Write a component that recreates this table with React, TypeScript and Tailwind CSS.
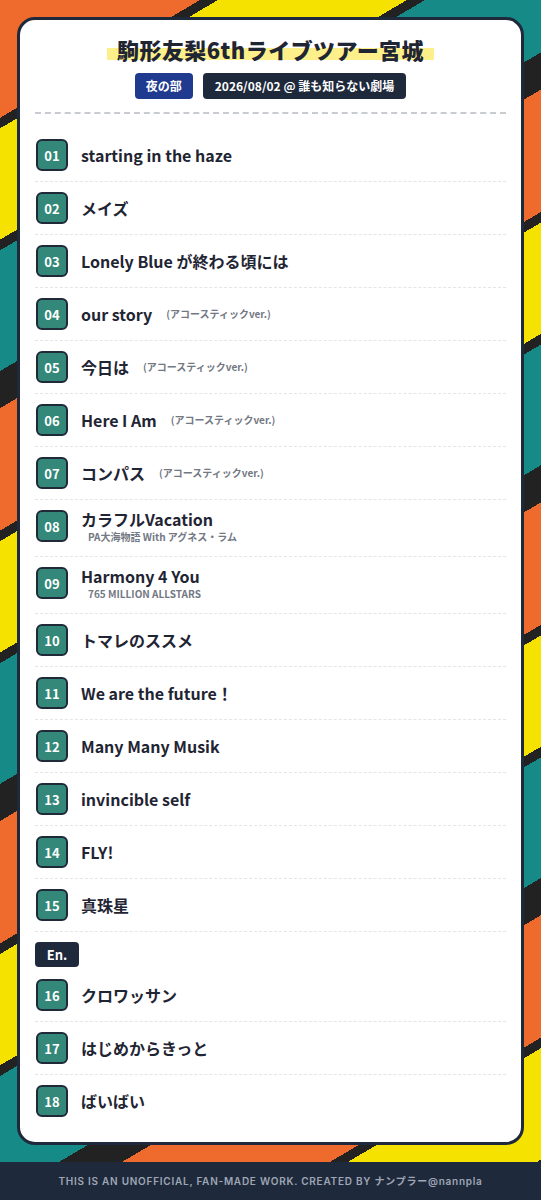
import React from "react";

type Song = { no: string; title: string; ver?: boolean; sub?: string };

const main: Song[] = [
  { no: "01", title: "starting in the haze" },
  { no: "02", title: "メイズ" },
  { no: "03", title: "Lonely Blue が終わる頃には" },
  { no: "04", title: "our story", ver: true },
  { no: "05", title: "今日は", ver: true },
  { no: "06", title: "Here I Am", ver: true },
  { no: "07", title: "コンパス", ver: true },
  { no: "08", title: "カラフルVacation", sub: "PA大海物語 With アグネス・ラム" },
  { no: "09", title: "Harmony 4 You", sub: "765 MILLION ALLSTARS" },
  { no: "10", title: "トマレのススメ" },
  { no: "11", title: "We are the future！" },
  { no: "12", title: "Many Many Musik" },
  { no: "13", title: "invincible self" },
  { no: "14", title: "FLY!" },
  { no: "15", title: "真珠星" },
];

const encore: Song[] = [
  { no: "16", title: "クロワッサン" },
  { no: "17", title: "はじめからきっと" },
  { no: "18", title: "ばいばい" },
];

function Row({ s, last }: { s: Song; last?: boolean }) {
  return (
    <div
      className={
        "flex gap-[13px] pl-px " +
        (s.sub ? "items-start pb-[12px] pt-[8px] " : "items-center py-[10px] ") +
        (last ? "" : "border-b border-dashed border-[#e3e5e8]")
      }
    >
      <div
        className={
          "flex h-[32px] w-[32px] shrink-0 items-center justify-center rounded-[6px] border-2 border-[#1f2937] bg-[#33887a] text-[13px] font-bold leading-none text-white " +
          (s.sub ? "mt-[2px]" : "")
        }
      >
        {s.no}
      </div>
      <div className="flex min-w-0 flex-col">
        <div className="flex items-center">
          <span className="text-[16px] font-bold leading-[22px] text-[#1f2533]">{s.title}</span>
          {s.ver && (
            <span className="ml-[14px] text-[10px] font-bold leading-[22px] text-[#737883]">
              (アコースティックver.)
            </span>
          )}
        </div>
        {s.sub && (
          <span className="ml-[7px] text-[10px] font-bold leading-[14px] text-[#737883]">{s.sub}</span>
        )}
      </div>
    </div>
  );
}

export default function App() {
  return (
    <div
      className="w-[541px] bg-white"
      style={{ fontFamily: '"Noto Sans CJK JP", "Noto Sans", sans-serif' }}
    >
      <section className="bg-[repeating-linear-gradient(149.5deg,#ee6b2d_0px,#ee6b2d_101.5px,#222222_101.5px,#222222_110.6px,#f6e200_110.6px,#f6e200_206.5px,#222222_206.5px,#222222_215.7px,#168a86_215.7px,#168a86_319.7px,#222222_319.7px,#222222_351.7px,#ee6b2d_351.7px,#ee6b2d_355.7px)] p-[17px]">
        <div className="rounded-[18px] border-[3px] border-[#1e293b] bg-white px-[15px] pb-[15px] pt-[14px]">
          <div className="flex justify-center">
            <h1 className="relative text-[22px] font-black leading-[30px] tracking-[0.02em] text-[#1f2533]">
              <span className="absolute bottom-[4px] left-[-10px] right-[-10px] h-[12px] bg-[#fdf08a]" />
              <span className="relative">駒形友梨6thライブツアー宮城</span>
            </h1>
          </div>
          <div className="mt-[9px] flex justify-center gap-[10px]">
            <span className="flex h-[26px] items-center rounded-[4px] bg-[#1f3a8f] px-[11px] text-[12px] font-bold text-white">
              夜の部
            </span>
            <span className="flex h-[26px] items-center rounded-[4px] bg-[#1e293b] px-[12px] text-[12px] font-bold text-white">
              2026/08/02 @ 誰も知らない劇場
            </span>
          </div>
          <div className="mt-[13px] border-t-2 border-dashed border-[#c8cbd0]" />
          <div className="mt-[15px] flex flex-col">
            {main.map((s) => (
              <Row key={s.no} s={s} />
            ))}
            <div className="pb-[2px] pt-[10px]">
              <span className="flex h-[25px] w-[44px] items-center justify-center rounded-[4px] bg-[#1e293b] text-[13px] font-bold text-white">
                En.
              </span>
            </div>
            {encore.map((s, i) => (
              <Row key={s.no} s={s} last={i === encore.length - 1} />
            ))}
          </div>
        </div>
      </section>
      <footer className="flex h-[38px] items-center justify-center bg-[#1e293b]">
        <span
          className="text-[10px] font-semibold tracking-[0.075em] text-[#9ea6b5]"
          style={{ fontFamily: 'Inter, "Noto Sans CJK JP", sans-serif' }}
        >
          THIS IS AN UNOFFICIAL, FAN-MADE WORK. CREATED BY ナンプラー@nannpla
        </span>
      </footer>
    </div>
  );
}
